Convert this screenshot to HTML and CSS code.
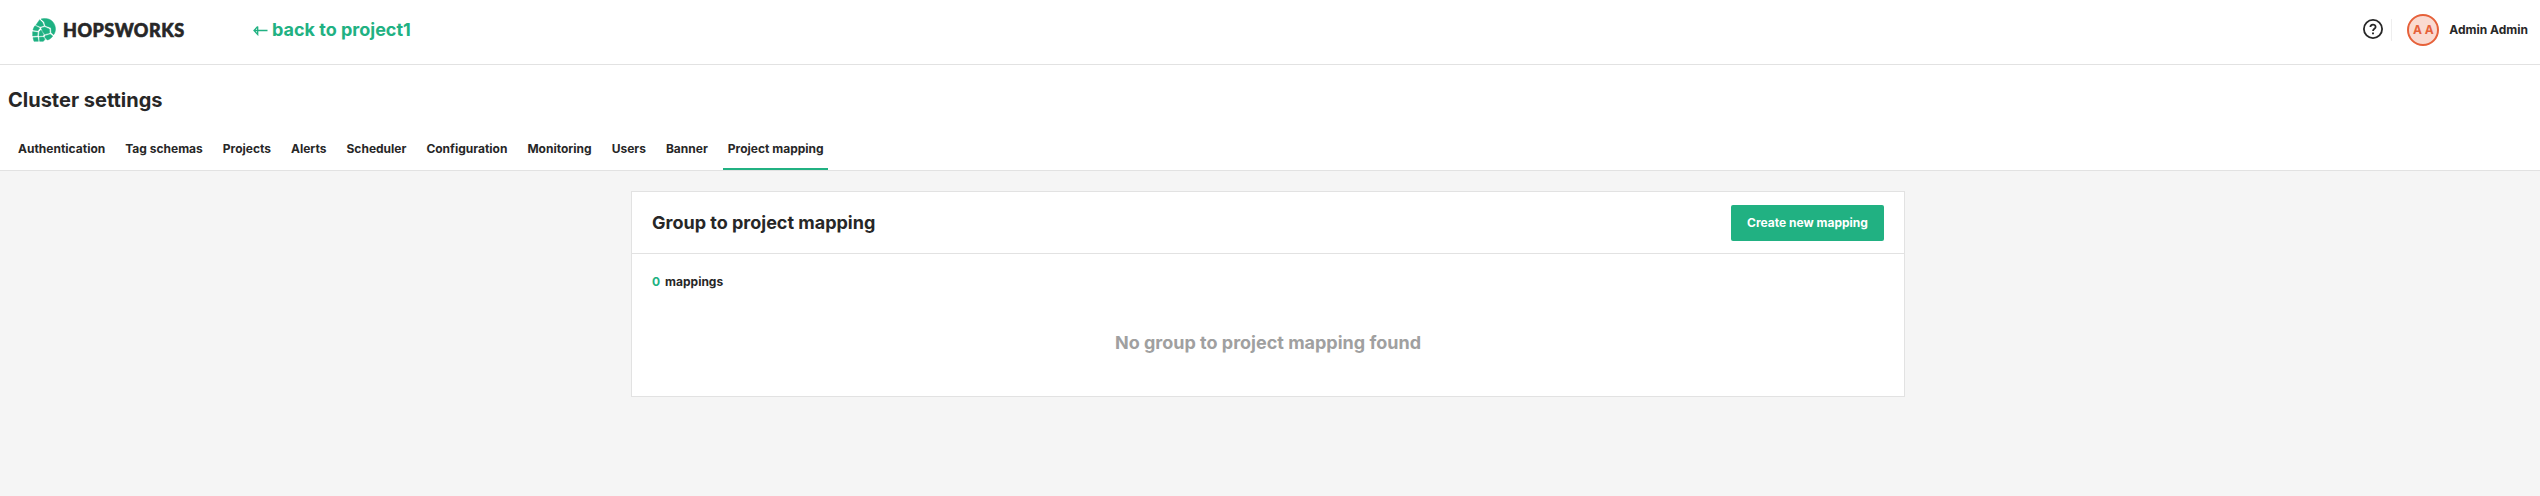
FILE: index.html
```html
<!DOCTYPE html>
<html lang="en">
<head>
<meta charset="utf-8">
<title>Hopsworks - Cluster settings</title>
<link rel="stylesheet" href="styles.css">
</head>
<body>
<header class="topbar">
  <div class="brand">
    <svg class="brand-mark" width="24" height="24" viewBox="0 0 72 72" fill="#1eb182" stroke="#1eb182" stroke-width="1.500" stroke-linejoin="round">
      <path d="M27 3C39-1 54 2 62 11C70 20 73 34 68 45L65 50L58 44L57 29L40 23L37 12Z"/>
      <path d="M23 5L32 14L35 23L25 26L12 21Z"/>
      <path d="M9 23L23 30L18 38L3 36C4 31 6 27 9 23Z"/>
      <path d="M28 30L38 27L52 33L53 45L38 49L32 41Z"/>
      <path d="M2 41L17 43L16 53L2 54Z"/>
      <path d="M22 41L27 36L35 50L33 53L21 54Z"/>
      <path d="M40 53L55 49L62 54C58 61 53 64 46 66L38 58Z"/>
      <path d="M3 59L17 58L19 70L6 70Z"/>
      <path d="M22 58L34 57L39 64L34 70L23 70Z"/>
    </svg>
    <span class="brand-name">HOPSWORKS</span>
  </div>
  <a class="back"><svg class="back-arrow" width="15" height="11" viewBox="0 0 15 11"><path d="M14.500 5.500H1.500M4.700 1.500L1 5.500L4.700 9.500V1.500" fill="none" stroke="#21b182" stroke-width="1.300"/></svg>back to project1</a>
  <div class="account">
    <svg class="help" width="20" height="20" viewBox="0 0 20 20" fill="none" stroke="#272727">
      <circle cx="10" cy="10" r="9.100" stroke-width="1.800"/>
      <path d="M7.400 8.100C7.400 4.700 12.600 4.800 12.600 7.900C12.600 9.700 10 9.800 10 12" stroke-width="1.800"/>
      <path d="M10 13.400V15.300" stroke-width="1.900"/>
    </svg>
    <span class="divider"></span>
    <span class="avatar">A A</span>
    <span class="username">Admin Admin</span>
  </div>
</header>
<section class="settings">
  <h1 class="title">Cluster settings</h1>
  <nav class="tabs">
    <a class="tab">Authentication</a>
    <a class="tab">Tag schemas</a>
    <a class="tab">Projects</a>
    <a class="tab">Alerts</a>
    <a class="tab">Scheduler</a>
    <a class="tab">Configuration</a>
    <a class="tab">Monitoring</a>
    <a class="tab">Users</a>
    <a class="tab">Banner</a>
    <a class="tab active">Project mapping</a>
  </nav>
</section>
<main class="card">
  <div class="card-head">
    <h2 class="card-title">Group to project mapping</h2>
    <button class="primary">Create new mapping</button>
  </div>
  <div class="card-body">
    <p class="count"><span class="number">0</span><span>mappings</span></p>
    <p class="empty">No group to project mapping found</p>
  </div>
</main>
</body>
</html>
```
FILE: styles.css
```css
* { box-sizing: border-box; }
body {
  margin: 0;
  min-height: 496px;
  background: #f5f5f5;
  color: #272727;
  font-family: Inter, "Liberation Sans", sans-serif;
  font-size: 12px;
  font-weight: 700;
}
h1, h2, p { margin: 0; }
.topbar {
  display: flex;
  align-items: center;
  height: 65px;
  padding: 0 12px 4px 32px;
  background: #fff;
  border-bottom: 1px solid #e2e2e2;
}
.brand { display: flex; align-items: center; width: 221px; }
.brand-mark { flex: none; }
.brand-name {
  margin-left: 7px;
  font-family: Lato, sans-serif;
  font-size: 18px;
  font-weight: 900;
  line-height: 24px;
  letter-spacing: .5px;
  -webkit-text-stroke: .6px #272727;
}
.back { display: flex; align-items: center; color: #21b182; font-size: 18px; line-height: 22px; }
.back-arrow { margin-right: 4px; }
.account { display: flex; align-items: center; margin-left: auto; line-height: 16px; }
.help { margin-bottom: 2px; }
.divider { width: 1px; height: 22px; margin: 0 15px 0 8px; background: #eee; }
.avatar {
  display: flex;
  align-items: center;
  justify-content: center;
  width: 32px;
  height: 32px;
  margin-right: 10px;
  border: 2px solid #e6613a;
  border-radius: 50%;
  background: #fadad1;
  color: #e6613a;
}
.settings { height: 106px; padding-top: 23px; background: #fff; border-bottom: 1px solid #e2e2e2; }
.title { padding-left: 8px; font-size: 20px; line-height: 24px; }
.tabs { display: flex; gap: 10px; margin-top: 22px; padding-left: 13px; }
.tab { height: 36px; padding: 7px 5px 0; line-height: 15px; }
.active { padding-right: 4px; border-bottom: 2px solid #21b182; }
.card { width: 1274px; height: 206px; margin: 20px 0 0 631px; background: #fff; border: 1px solid #e2e2e2; }
.card-head {
  display: flex;
  align-items: center;
  justify-content: space-between;
  height: 62px;
  padding: 0 20px;
  border-bottom: 1px solid #e2e2e2;
}
.card-title { font-size: 18px; line-height: 22px; }
.primary {
  width: 153px;
  height: 36px;
  padding: 0;
  border: 0;
  border-radius: 2px;
  background: #21b182;
  color: #fff;
  font: inherit;
}
.card-body { padding: 20px; }
.count { display: flex; gap: 5px; line-height: 15px; }
.number { color: #21b182; }
.empty { margin-top: 43px; color: #a0a0a0; font-size: 18px; line-height: 22px; text-align: center; }
```
